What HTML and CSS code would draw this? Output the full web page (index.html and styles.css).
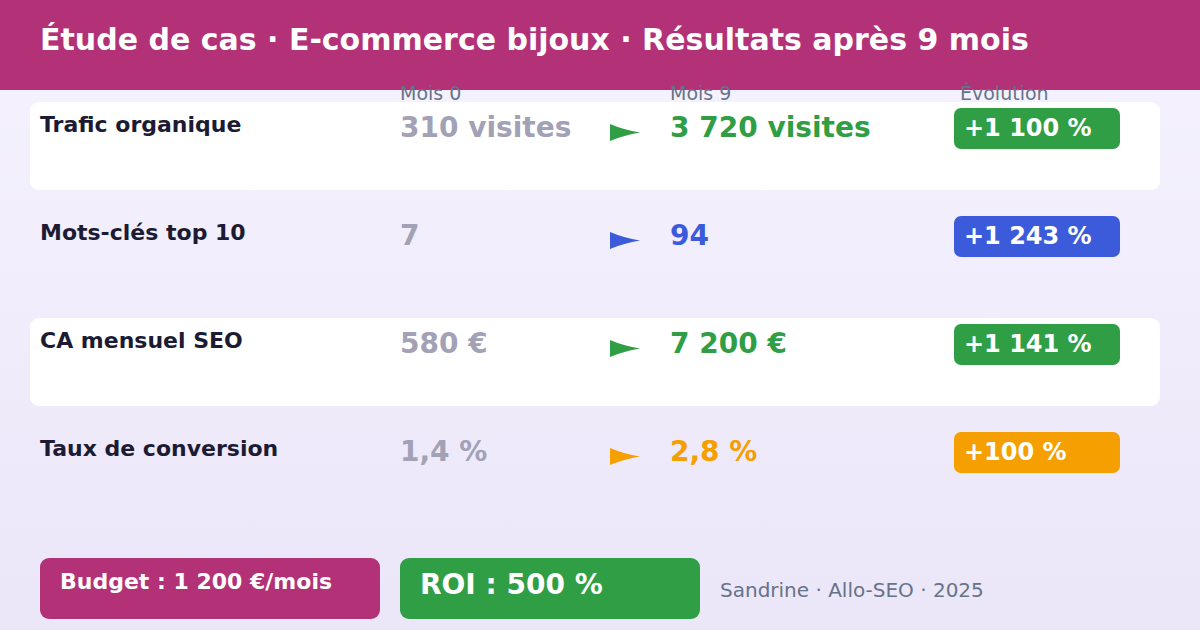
FILE: index.html
```html
<!DOCTYPE html>
<html lang="fr">
<head>
<meta charset="utf-8">
<title>Étude de cas</title>
<link rel="stylesheet" href="styles.css">
</head>
<body>
<div class="page">
  <header class="top">
    <h1 class="title">Étude de cas · E-commerce bijoux · Résultats après 9 mois</h1>
  </header>
  <div class="colhead">
    <span class="c-label"></span>
    <span class="c-v0">Mois 0</span>
    <span class="c-arrow"></span>
    <span class="c-v9">Mois 9</span>
    <span class="c-badge">Évolution</span>
  </div>
  <div class="rows">
    <div class="row card">
      <div class="label">Trafic organique</div>
      <div class="v0">310 visites</div>
      <div class="arrow"><svg width="30" height="17" viewBox="0 0 30 17"><path class="g" d="M0 0 Q14 6 30 8.5 Q14 11 0 17 Z"/></svg></div>
      <div class="v9 green">3 720 visites</div>
      <div class="badge bg-green">+1 100 %</div>
    </div>
    <div class="row">
      <div class="label">Mots-clés top 10</div>
      <div class="v0">7</div>
      <div class="arrow"><svg width="30" height="17" viewBox="0 0 30 17"><path class="b" d="M0 0 Q14 6 30 8.5 Q14 11 0 17 Z"/></svg></div>
      <div class="v9 blue">94</div>
      <div class="badge bg-blue">+1 243 %</div>
    </div>
    <div class="row card">
      <div class="label">CA mensuel SEO</div>
      <div class="v0">580 €</div>
      <div class="arrow"><svg width="30" height="17" viewBox="0 0 30 17"><path class="g" d="M0 0 Q14 6 30 8.5 Q14 11 0 17 Z"/></svg></div>
      <div class="v9 green">7 200 €</div>
      <div class="badge bg-green">+1 141 %</div>
    </div>
    <div class="row">
      <div class="label">Taux de conversion</div>
      <div class="v0">1,4 %</div>
      <div class="arrow"><svg width="30" height="17" viewBox="0 0 30 17"><path class="o" d="M0 0 Q14 6 30 8.5 Q14 11 0 17 Z"/></svg></div>
      <div class="v9 orange">2,8 %</div>
      <div class="badge bg-orange">+100 %</div>
    </div>
  </div>
  <footer class="bottom">
    <div class="budget">Budget : 1 200 €/mois</div>
    <div class="roi">ROI : 500 %</div>
    <div class="sign">Sandrine · Allo-SEO · 2025</div>
  </footer>
</div>
</body>
</html>
```

FILE: styles.css
```css
* { box-sizing: border-box; }
html, body { margin: 0; padding: 0; }
body {
  width: 1200px;
  height: 630px;
  overflow: hidden;
  font-family: "DejaVu Sans", Verdana, sans-serif;
  background: linear-gradient(180deg, #f6f3ff 0%, #ebe6f8 100%);
}
.page { width: 1200px; height: 630px; }
.top {
  height: 90px;
  background: #b33176;
  padding: 21px 0 0 40px;
}
.title {
  margin: 0;
  font-size: 30px;
  line-height: 38px;
  font-weight: bold;
  color: #ffffff;
  white-space: nowrap;
}
.colhead, .row {
  display: grid;
  grid-template-columns: 360px 210px 60px 284px 166px;
  padding-left: 10px;
}
.colhead {
  position: relative;
  margin: -8px 0 0 30px;
  height: 20px;
  font-size: 19px;
  line-height: 22px;
  color: #667389;
}
.c-badge { padding-left: 6px; }
.rows {
  display: flex;
  flex-direction: column;
  gap: 20px;
  margin: 0 40px 0 30px;
}
.row {
  height: 88px;
  padding-top: 8px;
  align-items: start;
  border-radius: 9px;
}
.card { background: #ffffff; }
.label {
  padding-top: 2px;
  font-size: 22px;
  line-height: 26px;
  font-weight: bold;
  color: #1c1b33;
}
.v0, .v9 {
  padding-top: 2px;
  font-size: 28px;
  line-height: 32px;
  font-weight: bold;
  color: #a2a1b6;
}
.arrow { padding-top: 14px; height: 31px; }
.arrow svg { display: block; }
.g { fill: #2f9e44; }
.b { fill: #3b5bdb; }
.o { fill: #f59f00; }
.green { color: #2f9e44; }
.blue { color: #3b5bdb; }
.orange { color: #f59f00; }
.badge {
  margin-top: -2px;
  height: 41px;
  padding-left: 10px;
  border-radius: 7px;
  font-size: 24px;
  line-height: 41px;
  font-weight: bold;
  color: #ffffff;
}
.bg-green { background: #2f9e44; }
.bg-blue { background: #3b5bdb; }
.bg-orange { background: #f59f00; }
.bottom {
  display: flex;
  align-items: flex-start;
  gap: 20px;
  margin: 44px 0 0 40px;
}
.budget, .roi {
  height: 61px;
  border-radius: 9px;
  font-weight: bold;
  color: #ffffff;
}
.budget {
  width: 340px;
  background: #b33176;
  padding: 9px 0 0 20px;
  font-size: 22px;
  line-height: 30px;
}
.roi {
  width: 300px;
  background: #2f9e44;
  padding: 9px 0 0 20px;
  font-size: 28px;
  line-height: 36px;
}
.sign {
  padding-top: 18px;
  font-size: 20px;
  line-height: 28px;
  color: #667389;
}
```
